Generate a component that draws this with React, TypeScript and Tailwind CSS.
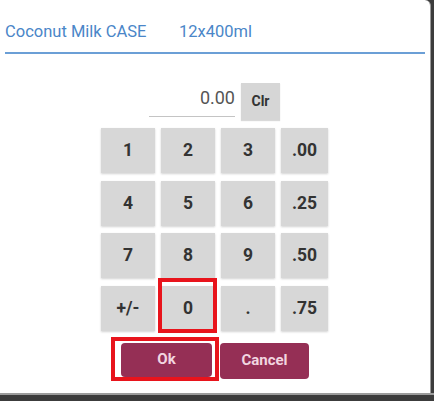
import React from 'react';

const keys = ['1', '2', '3', '.00', '4', '5', '6', '.25', '7', '8', '9', '.50', '+/-', '0', '.', '.75'];

export default function App() {
  return (
    <div className="relative w-[434px] h-[401px] bg-[#3c3c3c] flex flex-col" style={{ fontFamily: 'Roboto, "Liberation Sans", sans-serif' }}>
      <div className="w-[431px] h-[393px] bg-white rounded-tr-[6px] border-r border-[#9a9a9a] flex flex-col">
        <div className="pt-[22px] px-[5px]">
          <div className="flex text-[16.5px] leading-[20px] text-[#4a86c8]">
            <span className="w-[174px]">Coconut Milk CASE</span>
            <span>12x400ml</span>
          </div>
          <div className="mt-[10px] w-[420px] h-[2px] bg-[#6b9fd6]" />
        </div>

        <div className="flex items-start pl-[149px] mt-[29px]">
          <div className="w-[86px] h-[34px] border-b border-[#c4c4c4] text-right text-[18px] leading-[30px] text-[#555]">0.00</div>
          <button className="ml-[6px] w-[39px] h-[37px] bg-[#d6d6d6] text-[14px] font-bold text-[#333] shadow-[0_1px_1px_rgba(0,0,0,0.15)]">Clr</button>
        </div>

        <div className="grid grid-cols-[54px_54px_54px_47px] gap-x-[6px] gap-y-[7.5px] pl-[101px] mt-[8px]">
          {keys.map(k => (
            <button key={k} className="h-[45px] bg-[#d7d7d7] text-[17.5px] font-bold text-[#333] shadow-[0_1px_2px_rgba(0,0,0,0.18)]">{k}</button>
          ))}
        </div>

        <div className="flex gap-[8px] pl-[121px] mt-[12px]">
          <button className="w-[91px] h-[34px] rounded-[4px] bg-[#952f55] text-[15px] font-bold text-[#f2d6e0]">Ok</button>
          <button className="w-[89px] h-[36px] rounded-[4px] bg-[#952f55] text-[15px] font-bold text-[#f2d6e0]">Cancel</button>
        </div>
      </div>
      <div className="h-[2px] bg-[#9c9c9c]" />

      <div className="absolute left-[158px] top-[278px] w-[59px] h-[55px] border-[4px] border-[#e8141c]" />
      <div className="absolute left-[111px] top-[337px] w-[108px] h-[44px] border-[4px] border-[#e8141c]" />
    </div>
  );
}
